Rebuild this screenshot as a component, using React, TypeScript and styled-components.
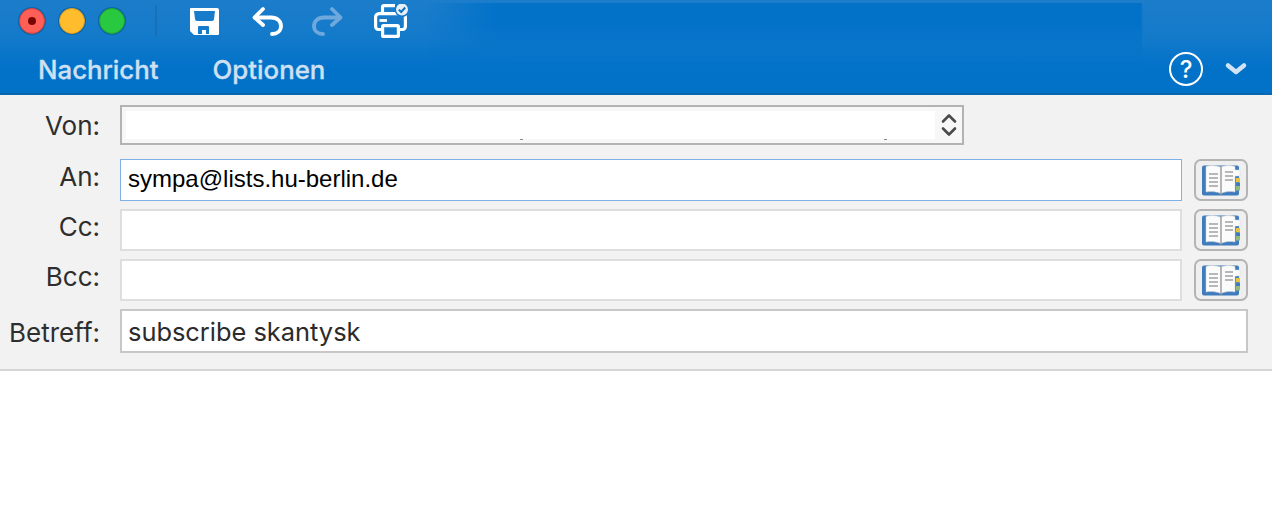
import React from "react";
import styled, { createGlobalStyle } from "styled-components";

const Global = createGlobalStyle`
  html, body { margin: 0; padding: 0; background: #fff; }
  body { font-family: Inter, "Liberation Sans", sans-serif; }
`;

const Page = styled.div`
  width: 1272px;
  height: 528px;
  overflow: hidden;
  background: #fff;
`;

const Header = styled.header`
  position: relative;
  height: 95px;
  box-sizing: border-box;
  background: linear-gradient(180deg, #1c7dca 0%, #137aca 40%, #0272c9 72%, #0272c9 100%);
  border-bottom: 2px solid #0566b0;
  display: flex;
  flex-direction: column;
`;

const Smudge = styled.div`
  position: absolute;
  left: 428px;
  top: 3px;
  width: 715px;
  height: 62px;
  background: #0272c9;
  mask-image: linear-gradient(90deg, transparent 0, #000 70px, #000 calc(100% - 2px), transparent 100%),
    linear-gradient(180deg, #000 0, #000 35%, transparent 100%);
  mask-composite: intersect;
`;

const TitleBar = styled.div`
  position: relative;
  height: 42px;
  display: flex;
  align-items: center;
  padding-left: 19px;
`;

const Lights = styled.div`
  display: flex;
  gap: 14px;
`;

const Light = styled.div<{ $fill: string; $ring: string }>`
  width: 26px;
  height: 26px;
  box-sizing: border-box;
  border-radius: 50%;
  background: ${(p) => p.$fill};
  border: 1px solid ${(p) => p.$ring};
  box-shadow: 0 0 0 1px rgba(10, 80, 140, 0.55);
  display: flex;
  align-items: center;
  justify-content: center;
`;

const Dot = styled.div`
  width: 8px;
  height: 8px;
  border-radius: 50%;
  background: #7a0604;
`;

const Separator = styled.div`
  width: 2px;
  height: 32px;
  background: #1a70b8;
  margin: 0 33px 0 30px;
`;

const Tools = styled.div`
  display: flex;
  align-items: center;
`;

const ToolIcon = styled.svg<{ $gap: number }>`
  display: block;
  margin-right: ${(p) => p.$gap}px;
`;

const TabBar = styled.nav`
  position: relative;
  flex: 1;
  display: flex;
  align-items: center;
  padding: 3px 24px 0 38px;
  gap: 54px;
`;

const Tab = styled.span`
  font-size: 25.8px;
  font-weight: 500;
  color: #cfe0f2;
  -webkit-text-stroke: 0.3px #cfe0f2;
`;

const TabSpacer = styled.div`
  flex: 1;
`;

const HelpBtn = styled.div`
  width: 34px;
  height: 34px;
  box-sizing: border-box;
  border: 2px solid #fff;
  border-radius: 50%;
  color: #fff;
  font-size: 24px;
  font-weight: 500;
  display: flex;
  align-items: center;
  justify-content: center;
  margin-right: -33px;
`;

const Form = styled.section`
  background: #f2f2f2;
  border-bottom: 2px solid #d4d4d4;
  padding: 10px 24px 16px 0;
  display: flex;
  flex-direction: column;
  gap: 8px;
`;

const Row = styled.div<{ $after?: number }>`
  display: flex;
  align-items: center;
  gap: 12px;
  margin-bottom: ${(p) => p.$after ?? 0}px;
`;

const Label = styled.label<{ $down?: number; $up?: number }>`
  width: 100px;
  margin: ${(p) => p.$down ?? 0}px 8px ${(p) => p.$up ?? 0}px 0;
  text-align: right;
  font-size: 26px;
  line-height: 30px;
  color: #2e2e2e;
  flex: none;
`;

const SenderBox = styled.div`
  width: 844px;
  height: 40px;
  box-sizing: border-box;
  border: 2px solid #b3b3b3;
  background: #f7f7f7;
  padding: 4px 0 4px 4px;
  display: flex;
  align-items: stretch;
  justify-content: space-between;
  position: relative;
`;

const SenderMask = styled.div`
  width: 809px;
  background: #fff;
`;

const Speck = styled.i<{ $x: number }>`
  position: absolute;
  bottom: 3px;
  left: ${(p) => p.$x}px;
  width: 3px;
  height: 1px;
  background: #8a8a8a;
`;

const Stepper = styled.svg`
  display: block;
  margin: 0 5px 0 0;
  align-self: center;
`;

const Field = styled.div<{ $tone?: "focus" | "plain" }>`
  flex: 1;
  height: 42px;
  box-sizing: border-box;
  background: #fff;
  border: ${(p) => (p.$tone === "focus" ? "1px solid #7fb0ea" : "2px solid #dedede")};
  padding: 0 0 2px ${(p) => (p.$tone === "focus" ? "7px" : "6px")};
  display: flex;
  align-items: center;
  font-family: "Liberation Sans", Arial, sans-serif;
  font-size: 24px;
  color: #000;
`;

const Subject = styled.div`
  flex: 1;
  height: 44px;
  box-sizing: border-box;
  background: #fff;
  border: 2px solid #c9c7c5;
  padding-left: 6px;
  display: flex;
  align-items: center;
  font-size: 25.4px;
  color: #2b2b2b;
`;

const BookBtn = styled.button`
  width: 54px;
  height: 42px;
  box-sizing: border-box;
  padding: 0 0 0 1px;
  background: #efefef;
  border: 2px solid #b4b4b4;
  border-radius: 7px;
  display: flex;
  align-items: center;
  justify-content: center;
`;

const BookIcon = () => (
  <svg width="39" height="31" viewBox="0 0 39 31">
    <rect x="0" y="0.500" width="37" height="30" rx="2" fill="#3f7cbd" />
    <rect x="34" y="13" width="4" height="4.500" fill="#e7c33f" />
    <rect x="34" y="17.500" width="4" height="3.500" fill="#3f7cbd" />
    <rect x="34" y="21" width="4" height="4.500" fill="#93b97c" />
    <path d="M4 1.500 C9 0 14 .5 19 2 L19 28.500 C14 26.500 9 26 4 27 Z" fill="#fbfbfb" stroke="#d4d4d4" strokeWidth=".5" />
    <path d="M19 2 C23 .5 28 0 33 1.500 L33 5 L38 5 L38 11 L33 11 L33 27 C28 26 23 26.500 19 28.500 Z" fill="#fbfbfb" stroke="#d4d4d4" strokeWidth=".5" />
    <path d="M19 2 V30" stroke="#8f8f8f" strokeWidth="1.200" />
    <g stroke="#b8b8b8" strokeWidth="2">
      <path d="M7 9h9M7 13h9M7 17h9M7 21h9" />
      <path d="M23 7h8M23 11h8M23 15h8" />
    </g>
  </svg>
);

export default function App() {
  return (
    <Page>
      <Global />
      <Header>
        <Smudge />
        <TitleBar>
          <Lights>
            <Light $fill="#ff5f57" $ring="#d9423c"><Dot /></Light>
            <Light $fill="#ffbd2e" $ring="#dd9f1e" />
            <Light $fill="#28c940" $ring="#1fa82f" />
          </Lights>
          <Separator />
          <Tools>
            <ToolIcon $gap={33} width="29" height="27" viewBox="0 0 29 27">
              <path fillRule="evenodd" fill="#fff" d="M1 0H27a2 2 0 0 1 2 2V26a1 1 0 0 1-1 1H4L0 23V1a1 1 0 0 1 1-1ZM4 3 5 11a2 2 0 0 0 2 2H22a2 2 0 0 0 2-2L25 3ZM8 26V19a1 1 0 0 1 1-1H18a1 1 0 0 1 1 1V26H16V22H12V26Z" />
            </ToolIcon>
            <ToolIcon $gap={29} width="31" height="30" viewBox="0 0 31 30" fill="none" stroke="#fff" strokeWidth="3.800" strokeLinecap="round" strokeLinejoin="round">
              <path d="M11 3 2.500 11.500 11 19" />
              <path d="M3 11.500H19C25 11.500 29 15 29 20S25 28 20 28" />
            </ToolIcon>
            <ToolIcon $gap={31} width="31" height="30" viewBox="0 0 31 30" fill="none" stroke="#6ea8dc" strokeWidth="3.800" strokeLinecap="round" strokeLinejoin="round">
              <path d="M20 3 28.500 11.500 20 19" />
              <path d="M28 11.500H12C6 11.500 2 15 2 20S6 28 11 28" />
            </ToolIcon>
            <ToolIcon $gap={0} width="34" height="34" viewBox="0 0 34 34" fill="none" stroke="#fff">
              <path d="M8.500 11V3.300A1.600 1.600 0 0 1 10.100 1.700H21" strokeWidth="3.200" />
              <path d="M23 11V6" strokeWidth="3.200" />
              <path d="M7 25.500H4.500A3 3 0 0 1 1.600 22.500V13A3.500 3.500 0 0 1 5 9.600H28A3.500 3.500 0 0 1 31.400 13V22.500A3 3 0 0 1 28.500 25.500H26" strokeWidth="3.200" />
              <path d="M5.500 16.500H13" strokeWidth="2.800" />
              <rect x="8.600" y="21.600" width="15.800" height="10.800" rx="1" strokeWidth="3.200" />
              <circle cx="28" cy="5.500" r="7.500" fill="#0f78ca" stroke="none" />
              <circle cx="28" cy="5.500" r="6" fill="#e6eff8" stroke="none" />
              <path d="M24.800 5.600 27.200 8 31.200 3.500" stroke="#0f70bd" strokeWidth="2" />
            </ToolIcon>
          </Tools>
        </TitleBar>
        <TabBar>
          <Tab>Nachricht</Tab>
          <Tab>Optionen</Tab>
          <TabSpacer />
          <HelpBtn>?</HelpBtn>
          <svg width="24" height="16" viewBox="0 0 24 16" fill="none" stroke="#d3e3f4" strokeWidth="4.500" strokeLinecap="round" strokeLinejoin="round">
            <path d="M4 4.500 12 11 20 4.500" />
          </svg>
        </TabBar>
      </Header>
      <Form>
        <Row $after={6}>
          <Label $down={2}>Von:</Label>
          <SenderBox>
            <SenderMask />
            <Speck $x={398} />
            <Speck $x={762} />
            <Stepper width="16" height="28" viewBox="0 0 16 28" fill="none" stroke="#4a4a4a" strokeWidth="2.600" strokeLinecap="round" strokeLinejoin="round">
              <path d="M2 10.500 8 4.500 14 10.500" />
              <path d="M2 17.500 8 23.500 14 17.500" />
            </Stepper>
          </SenderBox>
        </Row>
        <Row>
          <Label $up={6}>An:</Label>
          <Field $tone="focus">sympa@lists.hu-berlin.de</Field>
          <BookBtn><BookIcon /></BookBtn>
        </Row>
        <Row>
          <Label $up={6}>Cc:</Label>
          <Field />
          <BookBtn><BookIcon /></BookBtn>
        </Row>
        <Row>
          <Label $up={6}>Bcc:</Label>
          <Field />
          <BookBtn><BookIcon /></BookBtn>
        </Row>
        <Row>
          <Label $down={4}>Betreff:</Label>
          <Subject>subscribe skantysk</Subject>
        </Row>
      </Form>
    </Page>
  );
}
